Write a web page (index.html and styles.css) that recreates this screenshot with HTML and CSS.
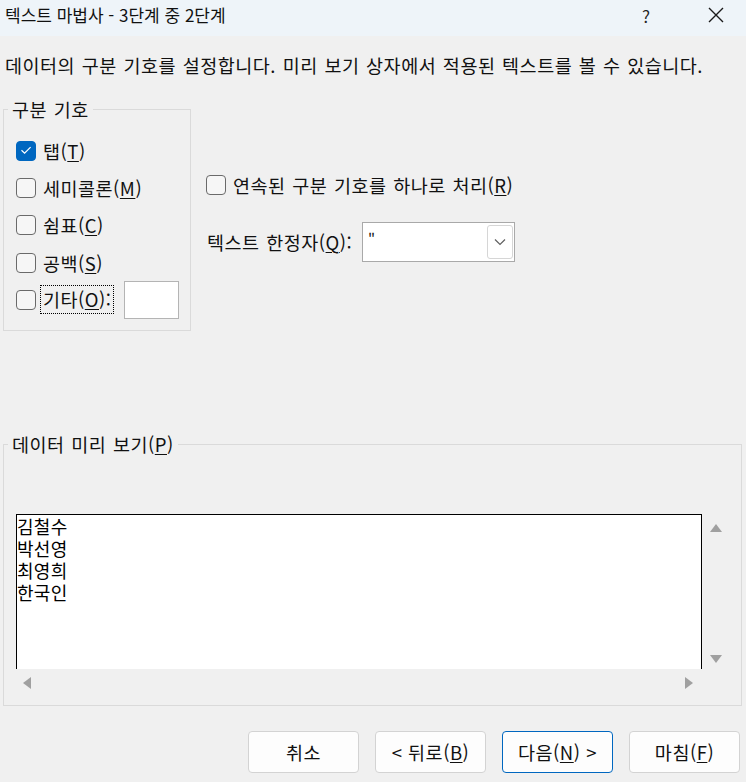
FILE: index.html
```html
<!DOCTYPE html>
<html lang="ko">
<head>
<meta charset="utf-8">
<title>텍스트 마법사 - 3단계 중 2단계</title>
<link rel="stylesheet" href="styles.css">
</head>
<body>
<div class="window">
  <div class="titlebar">
    <span class="title">텍스트 마법사 - 3단계 중 2단계</span>
    <span class="help">?</span>
    <span class="close">
      <svg width="16" height="16" viewBox="0 0 16 16"><path d="M1 1 L15 15 M15 1 L1 15" stroke="#1a1a1a" stroke-width="1.4" fill="none"/></svg>
    </span>
  </div>

  <div class="content">
    <p class="intro">데이터의 구분 기호를 설정합니다. 미리 보기 상자에서 적용된 텍스트를 볼 수 있습니다.</p>

    <div class="top">
      <fieldset class="group delims">
        <legend>구분 기호</legend>
        <div class="row">
          <span class="cb checked"><svg width="20" height="20" viewBox="0 0 20 20"><path d="M5.5 10.2 L8.6 13.2 L14.6 7.2" stroke="#fff" stroke-width="1.2" fill="none"/></svg></span>
          <span class="lbl">탭(<u>T</u>)</span>
        </div>
        <div class="row">
          <span class="cb"></span>
          <span class="lbl">세미콜론(<u>M</u>)</span>
        </div>
        <div class="row">
          <span class="cb"></span>
          <span class="lbl">쉼표(<u>C</u>)</span>
        </div>
        <div class="row">
          <span class="cb"></span>
          <span class="lbl">공백(<u>S</u>)</span>
        </div>
        <div class="row">
          <span class="cb"></span>
          <span class="lbl focus">기타(<u>O</u>):</span>
          <span class="textbox"></span>
        </div>
      </fieldset>

      <div class="options">
        <div class="row">
          <span class="cb"></span>
          <span class="lbl">연속된 구분 기호를 하나로 처리(<u>R</u>)</span>
        </div>
        <div class="qualifier">
          <span class="qlabel">텍스트 한정자(<u>Q</u>):</span>
          <div class="combo">
            <span class="value">"</span>
            <span class="drop">
              <svg width="12" height="8" viewBox="0 0 12 8"><path d="M1 1.5 L6 6.5 L11 1.5" stroke="#606060" stroke-width="1.2" fill="none"/></svg>
            </span>
          </div>
        </div>
      </div>
    </div>

    <fieldset class="group preview">
      <legend>데이터 미리 보기(<u>P</u>)</legend>
      <div class="pgrid">
        <div class="list">
          <div>김철수</div>
          <div>박선영</div>
          <div>최영희</div>
          <div>한국인</div>
        </div>
        <div class="vscroll">
          <span class="tri up"></span>
          <span class="tri down"></span>
        </div>
        <div class="hscroll">
          <span class="tri left"></span>
          <span class="tri right"></span>
        </div>
      </div>
    </fieldset>

    <div class="buttons">
      <button class="btn">취소</button>
      <button class="btn">&lt; 뒤로(<u>B</u>)</button>
      <button class="btn default">다음(<u>N</u>) &gt;</button>
      <button class="btn">마침(<u>F</u>)</button>
    </div>
  </div>
</div>
</body>
</html>
```

FILE: styles.css
```css
* { box-sizing: border-box; }

html, body {
  margin: 0;
  padding: 0;
  background: #f0f0f0;
}

body {
  font-family: "Noto Sans CJK KR", "Noto Sans", sans-serif;
  font-size: 18.5px;
  letter-spacing: 0.5px;
  word-spacing: 1px;
  color: #111;
  width: 746px;
  height: 782px;
  overflow: hidden;
}

u { text-decoration-thickness: 1px; text-underline-offset: 2px; }

.titlebar {
  height: 36px;
  background: #eef4f9;
  display: flex;
  align-items: center;
  padding-left: 5px;
  letter-spacing: 0;
  word-spacing: 0;
}

.title {
  font-size: 17px;
  flex: 1;
  line-height: 24px;
  margin-top: -6px;
}

.help {
  font-size: 17px;
  width: 20px;
  text-align: center;
  margin-right: 52px;
  margin-top: -6px;
  color: #222;
}

.close {
  display: flex;
  margin-right: 22px;
  margin-top: -6px;
}

.content {
  padding: 0 6px 0 3px;
}

.intro {
  margin: 17px 0 0 2px;
  line-height: 24px;
  white-space: nowrap;
}

.top {
  display: flex;
  align-items: flex-start;
  margin-top: 20px;
}

.group {
  margin: 0;
  border: 1px solid #dadada;
  padding: 0;
}

.group legend {
  margin-left: -8px;
  padding: 0 4px;
  line-height: 24px;
}

.delims {
  width: 188px;
  padding: 11px 11px 12px 12px;
}

.row {
  display: flex;
  align-items: center;
  height: 37.3px;
}

.cb {
  width: 20px;
  height: 20px;
  border: 1.5px solid #6a6a6a;
  border-radius: 4px;
  background: #f6f6f6;
  flex: none;
  display: flex;
}

.cb.checked {
  background: #0067c0;
  border-color: #0067c0;
}

.cb.checked svg { margin: -1.5px; }

.lbl {
  margin-left: 7px;
  line-height: 24px;
  white-space: nowrap;
}

.lbl.focus {
  margin-left: 4px;
  padding: 1px 2px 2px 2px;
  border: 1px dotted #000;
}

.textbox {
  width: 55px;
  height: 38px;
  background: #fff;
  border: 1px solid #b4b4b4;
  margin-left: auto;
  flex: none;
}

.options {
  margin-left: 15px;
  margin-top: 76px;
}

.options .row { height: 24px; }

.qualifier {
  display: flex;
  align-items: center;
  margin-top: 25px;
  margin-left: 1px;
}

.qlabel {
  line-height: 24px;
  white-space: nowrap;
  width: 155px;
  flex: none;
}

.combo {
  width: 153px;
  height: 40px;
  background: #fff;
  border: 1px solid #a9a9a9;
  display: flex;
  align-items: center;
  padding: 2px 1px 2px 5px;
}

.combo .value {
  flex: 1;
  font-size: 15px;
  line-height: 20px;
  margin-bottom: 4px;
}

.drop {
  width: 26px;
  height: 34px;
  border: 1px solid #d6d6d6;
  border-radius: 3px;
  display: flex;
  align-items: center;
  justify-content: center;
}

.preview {
  margin-top: 101px;
  width: 739px;
  padding: 58px 11px 9px 12px;
}

.pgrid {
  display: grid;
  grid-template-columns: 686px 27px;
  grid-template-rows: 155px 27px;
}

.list {
  background: #fff;
  border: 1px solid #000;
  border-bottom: none;
  padding-top: 1px;
  line-height: 21.7px;
  font-size: 18px;
  letter-spacing: 0.3px;
  color: #000;
}

.vscroll {
  display: flex;
  flex-direction: column;
  justify-content: space-between;
  align-items: center;
  padding: 10px 0 6px 0;
}

.hscroll {
  display: flex;
  justify-content: space-between;
  align-items: center;
  padding: 0 9px 0 7px;
}

.tri {
  width: 0;
  height: 0;
  border-style: solid;
  border-color: transparent;
}

.tri.up { border-width: 0 6px 8px 6px; border-bottom-color: #a0a0a0; }
.tri.down { border-width: 8px 6px 0 6px; border-top-color: #a0a0a0; }
.tri.left { border-width: 6px 8px 6px 0; border-right-color: #a0a0a0; }
.tri.right { border-width: 6px 0 6px 8px; border-left-color: #a0a0a0; }

.buttons {
  display: flex;
  justify-content: flex-end;
  gap: 16px;
  margin-top: 25px;
}

.btn {
  width: 111px;
  height: 42px;
  background: #fdfdfd;
  border: 1px solid #d3d3d3;
  border-radius: 4px;
  font-family: inherit;
  font-size: 18.5px;
  letter-spacing: 0.5px;
  color: #111;
  padding: 0;
  line-height: 24px;
}

.btn.default {
  border-color: #0067c0;
}
```
